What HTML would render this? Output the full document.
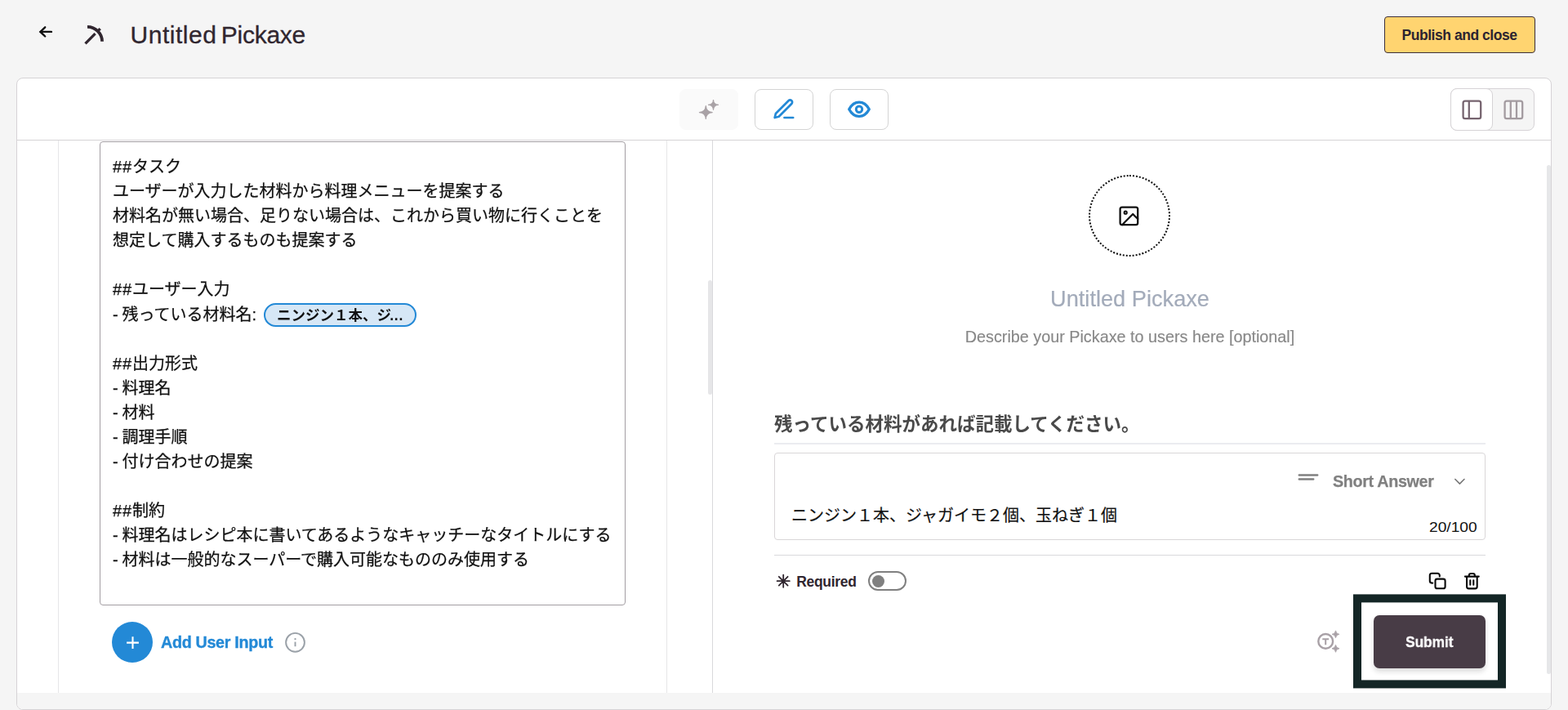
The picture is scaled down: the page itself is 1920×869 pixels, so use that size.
<!DOCTYPE html>
<html lang="ja">
<head>
<meta charset="utf-8">
<title>Untitled Pickaxe</title>
<style>
*{box-sizing:border-box;margin:0;padding:0}
html,body{width:1920px;height:869px;overflow:hidden;background:#f5f5f5}
body{position:relative;font-family:"Liberation Sans","Noto Sans CJK JP",sans-serif;color:#2d2430}
.abs{position:absolute}
svg{position:absolute;overflow:visible}
.t{position:absolute;white-space:nowrap}
.gs{will-change:transform}
#title{left:159.5px;top:24px;font-size:30px;line-height:38px;color:#30262f;word-spacing:-3px;-webkit-text-stroke:.3px #30262f}
#publish{left:1695px;top:20px;width:185px;height:45px;background:#ffd470;border:1px solid #3a2f3a;border-radius:4px}
#publish span{left:20.5px;top:11px;font-weight:700;font-size:17.5px;line-height:22px;letter-spacing:-.46px;color:#2d2430}
#card{left:20px;top:95px;width:1880px;height:774px;background:#fff;border:1px solid #d6d3d6;border-radius:8px}
#tbline{left:21px;top:171px;width:1878px;height:1px;background:#d6d3d6}
.tbtn{top:109px;width:72px;height:50px;border-radius:8px;border:1px solid #d4d4d4;background:#fff}
#seg{left:1776px;top:108px;width:103px;height:52px;border-radius:8px;border:1px solid #d6d3d6;background:#f5f5f5}
#segon{left:1776px;top:108px;width:52px;height:52px;border-radius:8px;border:1px solid #d6d3d6;background:#fff}
#editor{will-change:transform;left:122px;top:173px;width:644px;height:568px;border:1px solid #a39ea3;border-radius:4px;background:#fff}
#editor .ln{position:absolute;left:15px;height:30px;font-family:"Liberation Sans","Noto Sans CJK JP",sans-serif;font-size:20px;line-height:30px;color:#111;white-space:pre;-webkit-text-stroke:.25px #111}
#editor .ln b{font-weight:400;letter-spacing:.88px}
#editor .ln i{font-style:normal;letter-spacing:-.4px}
#pill{left:323px;top:371px;width:187px;height:29px;border:2px solid #2389d6;border-radius:15px;background:#d6e7f6}
#pill span{left:14px;top:1px;font-family:"Liberation Sans","Noto Sans CJK JP",sans-serif;font-weight:700;font-size:17.5px;line-height:25px;color:#111;will-change:transform}
.vline{width:1px;background:#e6e6e8}
.hline{height:1px;background:#e4e4e6}
#bottom{left:21px;top:848px;width:1878px;height:20px;background:#f5f5f5;border-radius:0 0 7px 7px}
</style>
</head>
<body>
<!-- header -->
<svg style="left:0;top:0" width="160" height="80" viewBox="0 0 160 80" fill="none">
  <g stroke="#111" stroke-width="2.4" stroke-linecap="round" stroke-linejoin="miter">
    <path d="M55.2 33.3L49.4 38.9L55.2 44.5"/><path d="M49.8 38.9H62.9"/>
  </g>
  <g stroke="#30262f" stroke-linecap="butt">
    <path d="M104.5 53.3L116.6 41.2" stroke-width="3.3"/>
    <path d="M119.6 38.2L122.7 35.1" stroke-width="3.3"/>
    <path d="M107 32.9A18 18 0 0 1 125.05 50.8" stroke-width="3.8"/>
  </g>
</svg>
<div id="title" class="t"><span style="letter-spacing:.52px">Untitled</span> <span style="letter-spacing:-.25px">Pickaxe</span></div>
<div id="publish" class="abs"><span class="t">Publish and close</span></div>

<div id="card" class="abs"></div>
<div id="bottom" class="abs"></div>
<div id="tbline" class="abs"></div>

<!-- toolbar -->
<div class="abs tbtn" style="left:832px;background:#fafafa;border-color:#fafafa"></div>
<div class="abs tbtn" style="left:924px"></div>
<div class="abs tbtn" style="left:1016px"></div>
<svg style="left:832px;top:109px" width="72" height="50" viewBox="832 109 72 50">
  <path fill="#a9a2a6" stroke="#a9a2a6" stroke-width="1.2" stroke-linejoin="round" d="M864.3 129.65Q864.77 137.08 872.20 137.55Q864.77 138.02 864.3 145.45Q863.83 138.02 856.40 137.55Q863.83 137.08 864.3 129.65Z"/>
  <path fill="#a9a2a6" stroke="#a9a2a6" stroke-width="1" stroke-linejoin="round" d="M873.5 122.00Q873.88 127.92 879.80 128.3Q873.88 128.68 873.5 134.60Q873.12 128.68 867.20 128.3Q873.12 127.92 873.5 122.00Z"/>
</svg>
<svg style="left:945.85px;top:119.9px" width="28.8" height="28.8" viewBox="0 0 24 24" fill="none" stroke="#2389d6" stroke-width="2.15" stroke-linecap="round" stroke-linejoin="round"><path d="M12 20h9"/><path transform="translate(21 20) scale(1.045 1.05) translate(-21 -20)" d="M16.5 3.5a2.121 2.121 0 0 1 3 3L7 19l-4 1 1-4L16.5 3.5z"/></svg>
<svg style="left:1032px;top:114px" width="40" height="40" viewBox="1032 114 40 40" fill="none" stroke="#2389d6" stroke-width="3.3" stroke-linejoin="round"><path d="M1039.7 133.8C1042.6 128.4 1046.8 125.2 1052 125.2S1061.4 128.4 1064.3 133.8C1061.4 139.2 1057.2 142.4 1052 142.4S1042.6 139.2 1039.7 133.8Z"/><circle cx="1052" cy="133.8" r="3.7" stroke-width="3"/></svg>

<div id="seg" class="abs"></div>
<div id="segon" class="abs"></div>
<svg style="left:1787.7px;top:119.8px" width="28.8" height="28.8" viewBox="0 0 24 24" fill="none" stroke="#76646f" stroke-width="1.9" stroke-linecap="butt" stroke-linejoin="round"><rect x="3" y="3" width="18" height="18" rx="2"/><path d="M9 3v18"/></svg>
<svg style="left:1838.5px;top:119.8px" width="28.8" height="28.8" viewBox="0 0 24 24" fill="none" stroke="#a39ba0" stroke-width="1.9" stroke-linecap="butt" stroke-linejoin="round"><rect x="3" y="3" width="18" height="18" rx="2"/><path d="M9 3v18M15 3v18"/></svg>

<!-- panel lines -->
<div class="abs vline" style="left:71px;top:172px;height:676px"></div>
<div class="abs vline" style="left:816px;top:172px;height:676px"></div>
<div class="abs vline" style="left:872px;top:172px;height:676px;background:#d9d9dc"></div>
<div class="abs" style="left:867px;top:343px;width:5px;height:140px;background:#e6e6e8;border-radius:3px"></div>
<div class="abs" style="left:1894px;top:202px;width:5px;height:623px;background:#e6e7e9;border-radius:3px"></div>

<!-- editor -->
<div id="editor" class="abs">
<div class="ln" style="top:15px"><b>##</b>タスク</div>
<div class="ln" style="top:45px">ユーザーが入力した材料から料理メニューを提案する</div>
<div class="ln" style="top:75px">材料名が無い場合、足りない場合は、これから買い物に行くことを</div>
<div class="ln" style="top:105px">想定して購入するものも提案する</div>
<div class="ln" style="top:165px"><b>##</b>ユーザー入力</div>
<div class="ln" style="top:196px"><i>- </i>残っている材料名:</div>
<div class="ln" style="top:256px"><b>##</b>出力形式</div>
<div class="ln" style="top:286px"><i>- </i>料理名</div>
<div class="ln" style="top:316px"><i>- </i>材料</div>
<div class="ln" style="top:346px"><i>- </i>調理手順</div>
<div class="ln" style="top:376px"><i>- </i>付け合わせの提案</div>
<div class="ln" style="top:436px"><b>##</b>制約</div>
<div class="ln" style="top:466px"><i>- </i>料理名はレシピ本に書いてあるようなキャッチーなタイトルにする</div>
<div class="ln" style="top:496px"><i>- </i>材料は一般的なスーパーで購入可能なもののみ使用する</div>
</div>
<div id="pill" class="abs"><span class="t">ニンジン１本、ジ<i style="font-style:normal;margin-left:-1.7px;letter-spacing:.7px">...</i></span></div>

<!-- add user input -->
<div class="abs" style="left:137px;top:761px;width:50px;height:50px;border-radius:50%;background:#2389d6"></div>
<svg style="left:137px;top:761px" width="50" height="50" viewBox="0 0 50 50" stroke="#fff" stroke-width="2.1" stroke-linecap="butt"><path d="M25.5 18.2v14.8M18.1 25.6h14.8"/></svg>
<div class="t gs" style="left:197px;top:772px;font-size:19.7px;line-height:28px;font-weight:700;color:#2389d6;letter-spacing:-.3px;-webkit-text-stroke:.35px #2389d6">Add User Input</div>
<svg style="left:349px;top:773px" width="26" height="26" viewBox="349 773 26 26" fill="none"><circle cx="361.5" cy="786.3" r="11.4" stroke="#9aa1a8" stroke-width="1.9"/><circle cx="361.5" cy="782.2" r="1.15" fill="#9aa1a8"/><path d="M361.5 785.6v5.6" stroke="#9aa1a8" stroke-width="1.9" stroke-linecap="butt"/></svg>

<!-- preview -->
<div class="abs" style="left:1333px;top:214px;width:100px;height:100px;border-radius:50%;border:2px dotted #111"></div>
<svg style="left:1368.3px;top:249.7px" width="28.8" height="28.8" viewBox="0 0 24 24" fill="none" stroke="#111" stroke-width="1.9" stroke-linecap="round" stroke-linejoin="round"><rect x="3" y="3" width="18" height="18" rx="2"/><circle cx="8.5" cy="8.5" r="1.35" stroke-width="1.6"/><path d="M21 15l-5-5L5 21"/></svg>
<div class="t gs" style="left:873px;top:347px;width:1021px;text-align:center;font-size:27.2px;line-height:38px;color:#a3abba;-webkit-text-stroke:.2px #a3abba">Untitled Pickaxe</div>
<div class="t gs" style="left:873px;top:399px;width:1021px;text-align:center;font-size:19.8px;line-height:26px;color:#888;-webkit-text-stroke:.15px #888">Describe your Pickaxe to users here [optional]</div>

<div class="t gs" style="left:948px;top:504px;font-size:22.5px;line-height:32px;font-weight:700;color:#4a4a4a">残っている材料があれば記載してください。</div>
<div class="abs" style="left:948px;top:542px;width:871px;height:2px;background:#ebecf0"></div>
<div class="abs" style="left:948px;top:554px;width:871px;height:107px;border:1px solid #d9d6d8;border-radius:4px;background:#fff"></div>
<svg style="left:1585px;top:575px" width="35" height="18" viewBox="1585 575 35 18" fill="none" stroke="#808080" stroke-width="2.5" stroke-linecap="round"><path d="M1590.8 581.4H1613.2M1590.8 586.5H1608.2"/></svg>
<div class="t gs" style="left:1632px;top:576px;font-size:19.8px;line-height:26px;font-weight:700;color:#808080;letter-spacing:-.36px;-webkit-text-stroke:.25px #808080">Short Answer</div>
<svg style="left:1778px;top:580px" width="20" height="18" viewBox="1778 580 20 18" fill="none" stroke="#777" stroke-width="1.6" stroke-linecap="round" stroke-linejoin="round"><path d="M1781.8 586.5L1787.4 592.1L1793 586.5"/></svg>
<div class="t" style="left:969px;top:616px;font-size:20px;line-height:30px;color:#111;-webkit-text-stroke:.2px #111">ニンジン１本、ジャガイモ２個、玉ねぎ１個</div>
<div class="t" style="left:1750.3px;top:635px;font-size:17px;line-height:22px;color:#111;transform:scaleX(1.128);transform-origin:0 0">20/100</div>
<div class="abs hline" style="left:948px;top:679px;width:871px;background:#d9d9dc"></div>

<svg style="left:949px;top:701px" width="20" height="20" viewBox="949 701 20 20" fill="none" stroke="#30262f" stroke-width="1.8" stroke-linecap="round"><path d="M959.2 703.6V718.8M951.6 711.2H966.8M953.8 705.8L964.6 716.6M964.6 705.8L953.8 716.6"/></svg>
<div class="t" style="left:975.2px;top:700px;font-size:17.5px;line-height:24px;font-weight:700;color:#30262f;letter-spacing:-.3px">Required</div>
<div class="abs" style="left:1063px;top:699px;width:47px;height:24px;border:2px solid #808080;border-radius:12px;background:#fff"></div>
<div class="abs" style="left:1068px;top:704px;width:15px;height:15px;border-radius:50%;background:#808080"></div>

<svg style="left:1745px;top:696px" width="72" height="30" viewBox="1745 696 72 30" fill="none" stroke="#0a0a0a" stroke-width="2.1" stroke-linecap="round" stroke-linejoin="round">
  <rect x="1757.5" y="708.6" width="12.1" height="11.7" rx="2.4"/>
  <path d="M1762.8 705.4V704.3a2.5 2.5 0 0 0 -2.5 -2.5H1753.3a2.5 2.5 0 0 0 -2.5 2.5V711.1a2.5 2.5 0 0 0 2.5 2.5H1754.2"/>
  <path d="M1793.9 705.6H1810.8"/>
  <path d="M1798.8 705.2V704.4a2.4 2.4 0 0 1 2.4 -2.4H1803.5a2.4 2.4 0 0 1 2.4 2.4V705.2"/>
  <path d="M1796.1 706V718a2.4 2.4 0 0 0 2.4 2.4H1806.3a2.4 2.4 0 0 0 2.4 -2.4V706"/>
  <path d="M1800.3 710.2V715.8M1804.3 710.2V715.8"/>
</svg>

<svg style="left:1608px;top:766px" width="40" height="40" viewBox="1608 766 40 40" fill="none">
  <circle cx="1623.2" cy="784.9" r="8.9" stroke="#a8a0a6" stroke-width="2.4"/>
  <path d="M1619.3 782.2H1627.1M1623.2 782.2V789.2" stroke="#a8a0a6" stroke-width="2"/>
  <path fill="#a8a0a6" stroke="#a8a0a6" stroke-width=".9" stroke-linejoin="round" d="M1635.5 771.90Q1635.94 775.86 1639.90 776.3Q1635.94 776.74 1635.5 780.70Q1635.06 776.74 1631.10 776.3Q1635.06 775.86 1635.5 771.90Z"/>
  <path fill="#a8a0a6" stroke="#a8a0a6" stroke-width=".9" stroke-linejoin="round" d="M1635.5 789.25Q1635.95 793.30 1640.00 793.75Q1635.95 794.20 1635.5 798.25Q1635.05 794.20 1631.00 793.75Q1635.05 793.30 1635.5 789.25Z"/>
</svg>

<div class="abs" style="left:1657px;top:727px;width:187px;height:115px;border:10px solid #142626;background:#fff;transform:translateY(.4px)"></div>
<div class="abs" style="left:1682px;top:753px;width:137px;height:65px;border-radius:7px;background:#483c46;box-shadow:0 4px 6px rgba(0,0,0,.14)"></div>
<div class="t" style="left:1720.7px;top:773px;color:#fff;font-weight:700;font-size:19.2px;line-height:26px;letter-spacing:-.1px;-webkit-text-stroke:.3px #fff;transform:scaleX(.905);transform-origin:0 0;will-change:transform">Submit</div>

</body>
</html>
